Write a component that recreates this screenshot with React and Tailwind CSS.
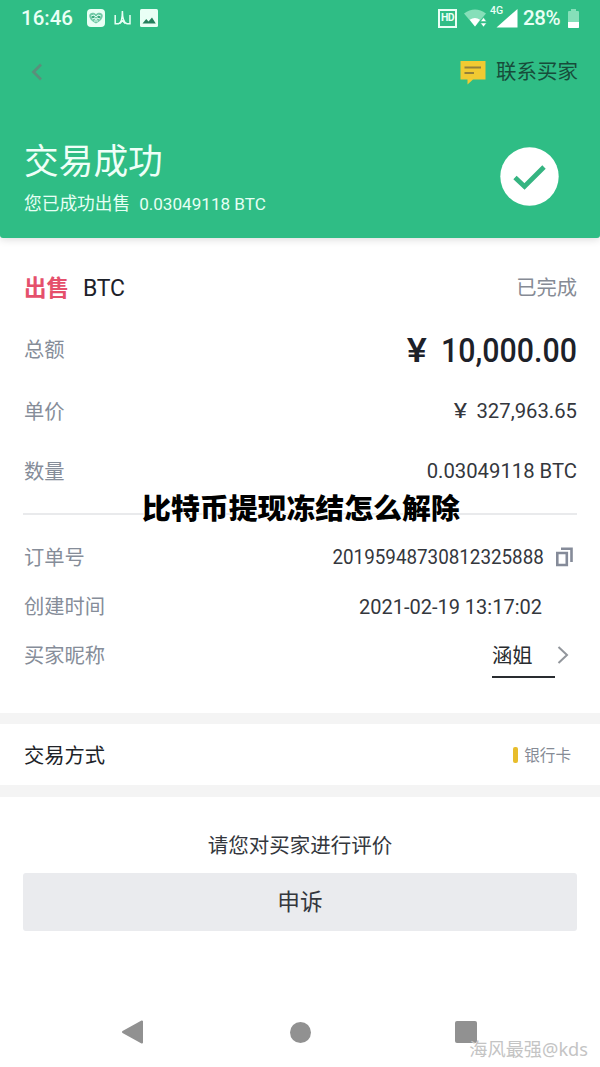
import React from 'react';

const amounts = [
    { label: '总额', value: '10,000.00', height: 'h-[63px]', className: 'pt-[2px] text-[33.5px] font-medium text-[#1d2129] origin-right scale-x-[0.905]', yen: 'mr-[18px]' },
    { label: '单价', value: '327,963.65', height: 'h-[60px]', className: 'text-[20.3px]', yen: 'mr-[11px]' },
    { label: '数量', value: '0.03049118 BTC', height: 'h-[60px]', className: 'text-[20.3px]' },
];

function StatusBar() {
    return (
        <div className="flex h-9 items-center pl-[21px] pr-[21px] text-[#e9fff5]">
            <span className="w-[53px] whitespace-nowrap text-[20.5px] font-medium leading-9">16:46</span>
            <svg className="ml-[13px]" width="18" height="18" viewBox="0 0 18 18">
                <rect width="18" height="18" rx="4" fill="currentColor" />
                <path d="M9 14.5C4 12 2 9 2.3 6.3C2.7 3.5 6.5 2.8 9 5.2C11.5 2.8 15.3 3.5 15.7 6.3C16 9 14 12 9 14.5Z" fill="#72c9a7" />
                <path d="M4 7L7 6L9 8L11 6L14 7M5 10L8 9L9 11L10 9L13 10M7 12H11" stroke="#e9fff5" fill="none" strokeWidth="0.9" />
                <circle cx="6" cy="8" r="1" fill="#2b9d70" />
                <circle cx="12" cy="8" r="1" fill="#2b9d70" />
            </svg>
            <svg className="ml-[9px]" width="18" height="16" viewBox="0 0 18 16" fill="none" stroke="currentColor" strokeWidth="1.5">
                <path d="M1.2 5V13.8H4.5C7 13 8.4 9 8.4 1C8.4 9 10.5 13 13 13.8H16V5M5.5 13.8L8.5 10.8L11.5 13.8" />
            </svg>
            <svg className="ml-[8px]" width="18" height="18" viewBox="0 0 18 18">
                <rect width="18" height="18" rx="1.5" fill="currentColor" />
                <path d="M2.5 14.5L6.2 10L8.5 12.5L12 8.5L15.8 14.5Z" fill="#25805d" />
            </svg>
            <div className="ml-auto flex items-center">
                <div className="flex h-[19px] w-[19px] items-center justify-center border-2 border-current text-[10.5px] font-bold leading-none tracking-[-0.5px]">HD</div>
                <svg className="ml-[7px]" width="24" height="19" viewBox="0 0 24 19">
                    <path d="M0 4.5Q11 -3.5 22 4.5L11 17.5Z" fill="#86dfb9" />
                    <path d="M5.7 10.8Q11 7 16 10.8L11 17.5Z" fill="#fff" />
                    <path d="M16.5 12.5L19.5 8.5L22.5 12.5ZM16.5 14L19.5 18L22.5 14Z" fill="#fff" stroke="#2fbd85" strokeWidth="0.5" />
                </svg>
                <div className="relative ml-[8px] h-[19px] w-[22px]">
                    <span className="absolute -left-[6px] -top-[3px] text-[10.5px] font-medium leading-none">4G</span>
                    <svg width="22" height="19" viewBox="0 0 22 19">
                        <path d="M0.5 18.5L21.5 0V18.5Z" fill="#fff" />
                    </svg>
                </div>
                <span className="ml-[5px] w-[40px] whitespace-nowrap text-[20.5px] font-medium leading-9 tracking-[-0.4px]">28%</span>
                <svg className="ml-[5px]" width="11" height="19" viewBox="0 0 11 19">
                    <path d="M0 3Q0 2 1 2H3V0H8V2H10Q11 2 11 3V19H0Z" fill="#86dfb9" />
                    <path d="M0 13H11V18Q11 19 10 19H1Q0 19 0 18Z" fill="#fff" />
                </svg>
            </div>
        </div>
    );
}

function Header() {
    return (
        <header className="h-[238px] rounded-b-[3px] bg-[#2fbd85] shadow-[0_1px_8px_rgba(0,0,0,0.16)]">
            <StatusBar />
            <div className="flex h-[72px] items-center pl-[31px] pr-[22px]">
                <svg width="12" height="18" viewBox="0 0 12 18" fill="none" stroke="#5b8f7b" strokeWidth="2.8">
                    <path d="M10 1.5L2.5 9L10 16.5" />
                </svg>
                <svg className="ml-auto" width="26" height="25" viewBox="0 0 26 25">
                    <path d="M0.5 1H25.5V19.5H13L7.5 24.5V19.5H0.5Z" fill="#f1ca32" />
                    <path d="M4.5 7.5H21M4.5 13H14" stroke="#94803a" strokeWidth="2" />
                </svg>
                <span className="ml-[10px] text-[20.5px] leading-none text-[#174c3a]">联系买家</span>
            </div>
            <div className="flex h-[130px] items-center justify-between pl-6 pr-[41px]">
                <div className="pt-[10px] text-[#e6fff4]">
                    <h1 className="text-[34.7px] font-normal leading-[46px] text-[#effff8]">交易成功</h1>
                    <p className="mt-[6px] flex text-[17.7px] leading-[26px]">
                        <span>您已成功出售</span>
                        <span className="ml-[9px] text-[17.1px]">0.03049118 BTC</span>
                    </p>
                </div>
                <svg className="mt-[6px]" width="59" height="59" viewBox="0 0 59 59">
                    <circle cx="29.5" cy="29.5" r="29.2" fill="#fff" />
                    <path d="M15 30.5L24.5 39.5L44 20" fill="none" stroke="#35b481" strokeWidth="4.8" />
                </svg>
            </div>
        </header>
    );
}

export default function App() {
    return (
        <div className="relative flex h-[1067px] w-[600px] flex-col overflow-hidden bg-white font-[Roboto,'Noto_Sans_CJK_SC',sans-serif] text-[#34373d]">
            <Header />

            <section className="pl-6 pr-[23px] pt-5">
                <div className="flex h-[60px] items-center justify-between">
                    <div className="flex items-center">
                        <span className="text-[22.5px] font-bold leading-none text-[#e5506c]">出售</span>
                        <span className="ml-[14px] text-[23px] leading-none tracking-[-0.2px] text-[#1d2129]">BTC</span>
                    </div>
                    <span className="text-[20.3px] leading-none text-[#868b95]">已完成</span>
                </div>
                {amounts.map(row => (
                    <div key={row.label} className={`flex items-center justify-between ${row.height}`}>
                        <span className="pt-[2px] text-[20.3px] leading-none text-[#868d99]">{row.label}</span>
                        <span className={`leading-none ${row.className}`}>
                            {row.yen && <span className={`inline-block scale-x-125 ${row.yen}`}>¥</span>}
                            {row.value}
                        </span>
                    </div>
                ))}
                <div className="-ml-px mt-3 h-[2px] bg-[#e9eaec]" />
            </section>

            <section className="mt-[17px] pl-6 pr-[23px] text-[20px]">
                <div className="flex h-[50px] items-center">
                    <span className="pt-[3px] text-[20.3px] leading-none text-[#868d99]">订单号</span>
                    <span className="ml-auto origin-right scale-x-[0.94] leading-none">20195948730812325888</span>
                    <svg className="ml-[12px] mr-[4px]" width="17" height="20" viewBox="0 0 17 20" fill="none" stroke="#858b99" strokeWidth="2.6">
                        <path d="M1.3 6H10.8V18H1.3ZM5 1.8H15.5V15" />
                    </svg>
                </div>
                <div className="flex h-[49px] items-center justify-between pr-[35px]">
                    <span className="pt-[2px] text-[20.3px] leading-none text-[#868d99]">创建时间</span>
                    <span className="leading-none">2021-02-19 13:17:02</span>
                </div>
                <div className="flex h-[49px] items-center">
                    <span className="pt-[2px] text-[20.3px] leading-none text-[#868d99]">买家昵称</span>
                    <span className="ml-auto h-[45px] w-[63px] border-b-2 border-[#292c30] text-[20.3px] leading-[46px] text-[#292c30]">涵姐</span>
                    <svg className="mb-[2px] ml-[2px] mr-[8px]" width="12" height="18" viewBox="0 0 12 18" fill="none" stroke="#92969c" strokeWidth="2">
                        <path d="M1.5 1L10 9L1.5 17" />
                    </svg>
                </div>
            </section>

            <div className="mt-[33px] h-[11px] bg-[#f4f4f4]" />
            <section className="flex h-[61px] items-center px-6">
                <span className="pt-[3px] text-[20.3px] leading-none text-[#202328]">交易方式</span>
                <span className="ml-auto h-[16px] w-[5px] rounded-[2px] bg-[#e8bd2c]" />
                <span className="ml-[6px] mr-[5px] pt-[4px] text-[15.6px] leading-none text-[#868b95]">银行卡</span>
            </section>
            <div className="h-3 bg-[#f4f4f4]" />

            <section className="px-[23px] pt-[34px] text-center">
                <p className="text-[20.5px] leading-[30px]">请您对买家进行评价</p>
                <button className="mt-[12px] h-[58px] w-full rounded-[3px] bg-[#eaebee] pt-[2px] text-[22.7px] leading-[56px]">申诉</button>
            </section>

            <nav className="mt-[89px] flex h-6 items-center pl-[121px] pr-[123px]">
                <svg width="23" height="24" viewBox="0 0 23 24" fill="#919191" stroke="#919191" strokeWidth="2" strokeLinejoin="round">
                    <path d="M2 12L21 1.5V22.5Z" />
                </svg>
                <div className="ml-[146px] h-[21px] w-[21px] rounded-full bg-[#919191]" />
                <div className="ml-auto h-[22px] w-[22px] rounded-[2px] bg-[#919191]" />
            </nav>

            {/* overlay caption and signature */}
            <h2 className="absolute left-[142px] top-[487px] whitespace-nowrap text-[28.9px] font-black leading-[44px] text-black [-webkit-text-stroke:2px_white] [paint-order:stroke_fill]">
                比特币提现冻结怎么解除
            </h2>
            <span className="absolute right-[12px] top-[1036px] whitespace-nowrap font-['Noto_Sans','Noto_Sans_CJK_SC',sans-serif] text-[18.2px] leading-[26px] text-[#c4c4c4]">海风最强@kds</span>
        </div>
    );
}
